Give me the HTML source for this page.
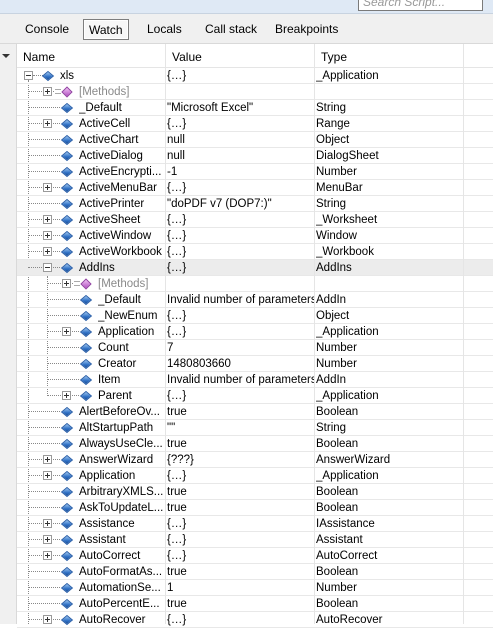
<!DOCTYPE html>
<html><head><meta charset="utf-8"><style>
*{margin:0;padding:0;box-sizing:border-box}
body{width:493px;height:624px;overflow:hidden;background:#fff;font:11.5px "Liberation Sans",sans-serif;color:#000;position:relative}
.top{position:absolute;left:0;top:0;width:493px;height:14px;background:#dfe9f5;border-bottom:1px solid #c8d3e0}
.search{position:absolute;left:358px;top:-4px;width:125px;height:15px;background:#fff;border:1px solid #7a7a7a;font-style:italic;color:#999;padding-left:4px;line-height:11px;font-size:12px}
.tabs{position:absolute;left:0;top:14px;width:493px;height:30px;background:#f0f0f0;border-bottom:1px solid #d9d9d9}
.tab{position:absolute;top:8px;font-size:12px}
.tab.sel{top:5px;height:21px;border:1px solid #7d7d7d;background:#f7f7f7;padding:3px 5px;box-shadow:inset 0 0 0 1px #fff}
.left{position:absolute;left:0;top:44px;width:17px;height:580px;background:#f0f0f0;border-right:1px solid #d9d9d9}
.arr{position:absolute;left:2px;top:10px;border-left:4px solid transparent;border-right:4px solid transparent;border-top:4px solid #333}
.hdr{position:absolute;left:17px;top:44px;width:476px;height:24px;background:#fff;border-bottom:1px solid #e5e5e5;font-size:12px}
.hdr span{position:absolute;top:6px}
.vs{position:absolute;top:44px;width:1px;height:580px;background:#e5e5e5;z-index:2}
.r{position:absolute;left:17px;width:476px;height:16px;border-bottom:1px solid #e8e8e8;line-height:16px}
.r span{position:absolute;top:0;white-space:nowrap;overflow:hidden}
.r span:nth-last-child(3){width:86px}
.v{left:150px;width:147px}.t{left:299px;width:147px}
.e{position:absolute;top:3px;width:9px;height:9px;border:1px solid #9a9a9a;background:#fff}
.e::before{content:"";position:absolute;left:1px;top:3px;width:5px;height:1px;background:#333}
.e.p::after{content:"";position:absolute;left:3px;top:1px;width:1px;height:5px;background:#333}
.c{position:absolute;top:4px;width:8px;height:8px;transform:rotate(45deg) skew(-5deg,-5deg);background:linear-gradient(135deg,#9cc6f2,#2e6fc4 60%,#1b4f96);border:1px solid #2a5fa8}
.m{position:absolute;top:4px;width:8px;height:8px;transform:rotate(45deg);background:linear-gradient(135deg,#f0c0f4,#b050c0);border:1px solid #9040a0}
.ml{position:absolute;top:5px;width:6px;height:5px;border-top:1px solid #aaa;border-bottom:1px solid #aaa;background:#fff}
.g{color:#8a8a8a}
.hd{position:absolute;top:7px;height:0;border-top:1px dotted #888}
.vd{position:absolute;width:0;border-left:1px dotted #888}
.sel{background:#ececec}
</style></head><body>
<div class="top"><div class="search">Search Script...</div></div>
<div class="tabs">
<span class="tab" style="left:25px">Console</span>
<span class="tab sel" style="left:83px">Watch</span>
<span class="tab" style="left:147px">Locals</span>
<span class="tab" style="left:205px">Call stack</span>
<span class="tab" style="left:275px">Breakpoints</span>
</div>
<div class="left"><div class="arr"></div></div>
<div class="hdr"><span style="left:6px">Name</span><span style="left:155px">Value</span><span style="left:304px">Type</span></div>
<div class="vs" style="left:165px"></div><div class="vs" style="left:314px"></div><div class="vs" style="left:463px"></div>
<div class="vd" style="left:28px;top:80px;height:544px"></div>
<div class="vd" style="left:47px;top:276px;height:120px"></div>

<div class="r" style="top:68px"><div class="hd" style="left:16px;width:10px"></div><b class="e" style="left:7px"></b><i class="c" style="left:27px"></i><span style="left:43px">xls</span><span class="v">{…}</span><span class="t">_Application</span></div>
<div class="r" style="top:84px"><div class="hd" style="left:11px;width:30px"></div><b class="e p" style="left:26px"></b><i class="ml" style="left:38px"></i><i class="m" style="left:46px"></i><span class="g" style="left:62px">[Methods]</span></div>
<div class="r" style="top:100px"><div class="hd" style="left:11px;width:32px"></div><i class="c" style="left:46px"></i><span style="left:62px">_Default</span><span class="v">"Microsoft Excel"</span><span class="t">String</span></div>
<div class="r" style="top:116px"><div class="hd" style="left:11px;width:32px"></div><b class="e p" style="left:26px"></b><i class="c" style="left:46px"></i><span style="left:62px">ActiveCell</span><span class="v">{…}</span><span class="t">Range</span></div>
<div class="r" style="top:132px"><div class="hd" style="left:11px;width:32px"></div><i class="c" style="left:46px"></i><span style="left:62px">ActiveChart</span><span class="v">null</span><span class="t">Object</span></div>
<div class="r" style="top:148px"><div class="hd" style="left:11px;width:32px"></div><i class="c" style="left:46px"></i><span style="left:62px">ActiveDialog</span><span class="v">null</span><span class="t">DialogSheet</span></div>
<div class="r" style="top:164px"><div class="hd" style="left:11px;width:32px"></div><i class="c" style="left:46px"></i><span style="left:62px">ActiveEncrypti...</span><span class="v">-1</span><span class="t">Number</span></div>
<div class="r" style="top:180px"><div class="hd" style="left:11px;width:32px"></div><b class="e p" style="left:26px"></b><i class="c" style="left:46px"></i><span style="left:62px">ActiveMenuBar</span><span class="v">{…}</span><span class="t">MenuBar</span></div>
<div class="r" style="top:196px"><div class="hd" style="left:11px;width:32px"></div><i class="c" style="left:46px"></i><span style="left:62px">ActivePrinter</span><span class="v">"doPDF v7 (DOP7:)"</span><span class="t">String</span></div>
<div class="r" style="top:212px"><div class="hd" style="left:11px;width:32px"></div><b class="e p" style="left:26px"></b><i class="c" style="left:46px"></i><span style="left:62px">ActiveSheet</span><span class="v">{…}</span><span class="t">_Worksheet</span></div>
<div class="r" style="top:228px"><div class="hd" style="left:11px;width:32px"></div><b class="e p" style="left:26px"></b><i class="c" style="left:46px"></i><span style="left:62px">ActiveWindow</span><span class="v">{…}</span><span class="t">Window</span></div>
<div class="r" style="top:244px"><div class="hd" style="left:11px;width:32px"></div><b class="e p" style="left:26px"></b><i class="c" style="left:46px"></i><span style="left:62px">ActiveWorkbook</span><span class="v">{…}</span><span class="t">_Workbook</span></div>
<div class="r sel" style="top:260px"><div class="hd" style="left:11px;width:32px"></div><b class="e" style="left:26px"></b><i class="c" style="left:46px"></i><span style="left:62px">AddIns</span><span class="v">{…}</span><span class="t">AddIns</span></div>
<div class="r" style="top:276px"><div class="hd" style="left:30px;width:30px"></div><b class="e p" style="left:45px"></b><i class="ml" style="left:57px"></i><i class="m" style="left:65px"></i><span class="g" style="left:81px;width:67px">[Methods]</span></div>
<div class="r" style="top:292px"><div class="hd" style="left:30px;width:32px"></div><i class="c" style="left:65px"></i><span style="left:81px;width:67px">_Default</span><span class="v">Invalid number of parameters.</span><span class="t">AddIn</span></div>
<div class="r" style="top:308px"><div class="hd" style="left:30px;width:32px"></div><i class="c" style="left:65px"></i><span style="left:81px;width:67px">_NewEnum</span><span class="v">{…}</span><span class="t">Object</span></div>
<div class="r" style="top:324px"><div class="hd" style="left:30px;width:32px"></div><b class="e p" style="left:45px"></b><i class="c" style="left:65px"></i><span style="left:81px;width:67px">Application</span><span class="v">{…}</span><span class="t">_Application</span></div>
<div class="r" style="top:340px"><div class="hd" style="left:30px;width:32px"></div><i class="c" style="left:65px"></i><span style="left:81px;width:67px">Count</span><span class="v">7</span><span class="t">Number</span></div>
<div class="r" style="top:356px"><div class="hd" style="left:30px;width:32px"></div><i class="c" style="left:65px"></i><span style="left:81px;width:67px">Creator</span><span class="v">1480803660</span><span class="t">Number</span></div>
<div class="r" style="top:372px"><div class="hd" style="left:30px;width:32px"></div><i class="c" style="left:65px"></i><span style="left:81px;width:67px">Item</span><span class="v">Invalid number of parameters.</span><span class="t">AddIn</span></div>
<div class="r" style="top:388px"><div class="hd" style="left:30px;width:32px"></div><b class="e p" style="left:45px"></b><i class="c" style="left:65px"></i><span style="left:81px;width:67px">Parent</span><span class="v">{…}</span><span class="t">_Application</span></div>
<div class="r" style="top:404px"><div class="hd" style="left:11px;width:32px"></div><i class="c" style="left:46px"></i><span style="left:62px">AlertBeforeOv...</span><span class="v">true</span><span class="t">Boolean</span></div>
<div class="r" style="top:420px"><div class="hd" style="left:11px;width:32px"></div><i class="c" style="left:46px"></i><span style="left:62px">AltStartupPath</span><span class="v">""</span><span class="t">String</span></div>
<div class="r" style="top:436px"><div class="hd" style="left:11px;width:32px"></div><i class="c" style="left:46px"></i><span style="left:62px">AlwaysUseCle...</span><span class="v">true</span><span class="t">Boolean</span></div>
<div class="r" style="top:452px"><div class="hd" style="left:11px;width:32px"></div><b class="e p" style="left:26px"></b><i class="c" style="left:46px"></i><span style="left:62px">AnswerWizard</span><span class="v">{???}</span><span class="t">AnswerWizard</span></div>
<div class="r" style="top:468px"><div class="hd" style="left:11px;width:32px"></div><b class="e p" style="left:26px"></b><i class="c" style="left:46px"></i><span style="left:62px">Application</span><span class="v">{…}</span><span class="t">_Application</span></div>
<div class="r" style="top:484px"><div class="hd" style="left:11px;width:32px"></div><i class="c" style="left:46px"></i><span style="left:62px">ArbitraryXMLS...</span><span class="v">true</span><span class="t">Boolean</span></div>
<div class="r" style="top:500px"><div class="hd" style="left:11px;width:32px"></div><i class="c" style="left:46px"></i><span style="left:62px">AskToUpdateL...</span><span class="v">true</span><span class="t">Boolean</span></div>
<div class="r" style="top:516px"><div class="hd" style="left:11px;width:32px"></div><b class="e p" style="left:26px"></b><i class="c" style="left:46px"></i><span style="left:62px">Assistance</span><span class="v">{…}</span><span class="t">IAssistance</span></div>
<div class="r" style="top:532px"><div class="hd" style="left:11px;width:32px"></div><b class="e p" style="left:26px"></b><i class="c" style="left:46px"></i><span style="left:62px">Assistant</span><span class="v">{…}</span><span class="t">Assistant</span></div>
<div class="r" style="top:548px"><div class="hd" style="left:11px;width:32px"></div><b class="e p" style="left:26px"></b><i class="c" style="left:46px"></i><span style="left:62px">AutoCorrect</span><span class="v">{…}</span><span class="t">AutoCorrect</span></div>
<div class="r" style="top:564px"><div class="hd" style="left:11px;width:32px"></div><i class="c" style="left:46px"></i><span style="left:62px">AutoFormatAs...</span><span class="v">true</span><span class="t">Boolean</span></div>
<div class="r" style="top:580px"><div class="hd" style="left:11px;width:32px"></div><i class="c" style="left:46px"></i><span style="left:62px">AutomationSe...</span><span class="v">1</span><span class="t">Number</span></div>
<div class="r" style="top:596px"><div class="hd" style="left:11px;width:32px"></div><i class="c" style="left:46px"></i><span style="left:62px">AutoPercentE...</span><span class="v">true</span><span class="t">Boolean</span></div>
<div class="r" style="top:612px"><div class="hd" style="left:11px;width:32px"></div><b class="e p" style="left:26px"></b><i class="c" style="left:46px"></i><span style="left:62px">AutoRecover</span><span class="v">{…}</span><span class="t">AutoRecover</span></div>
</body></html>
